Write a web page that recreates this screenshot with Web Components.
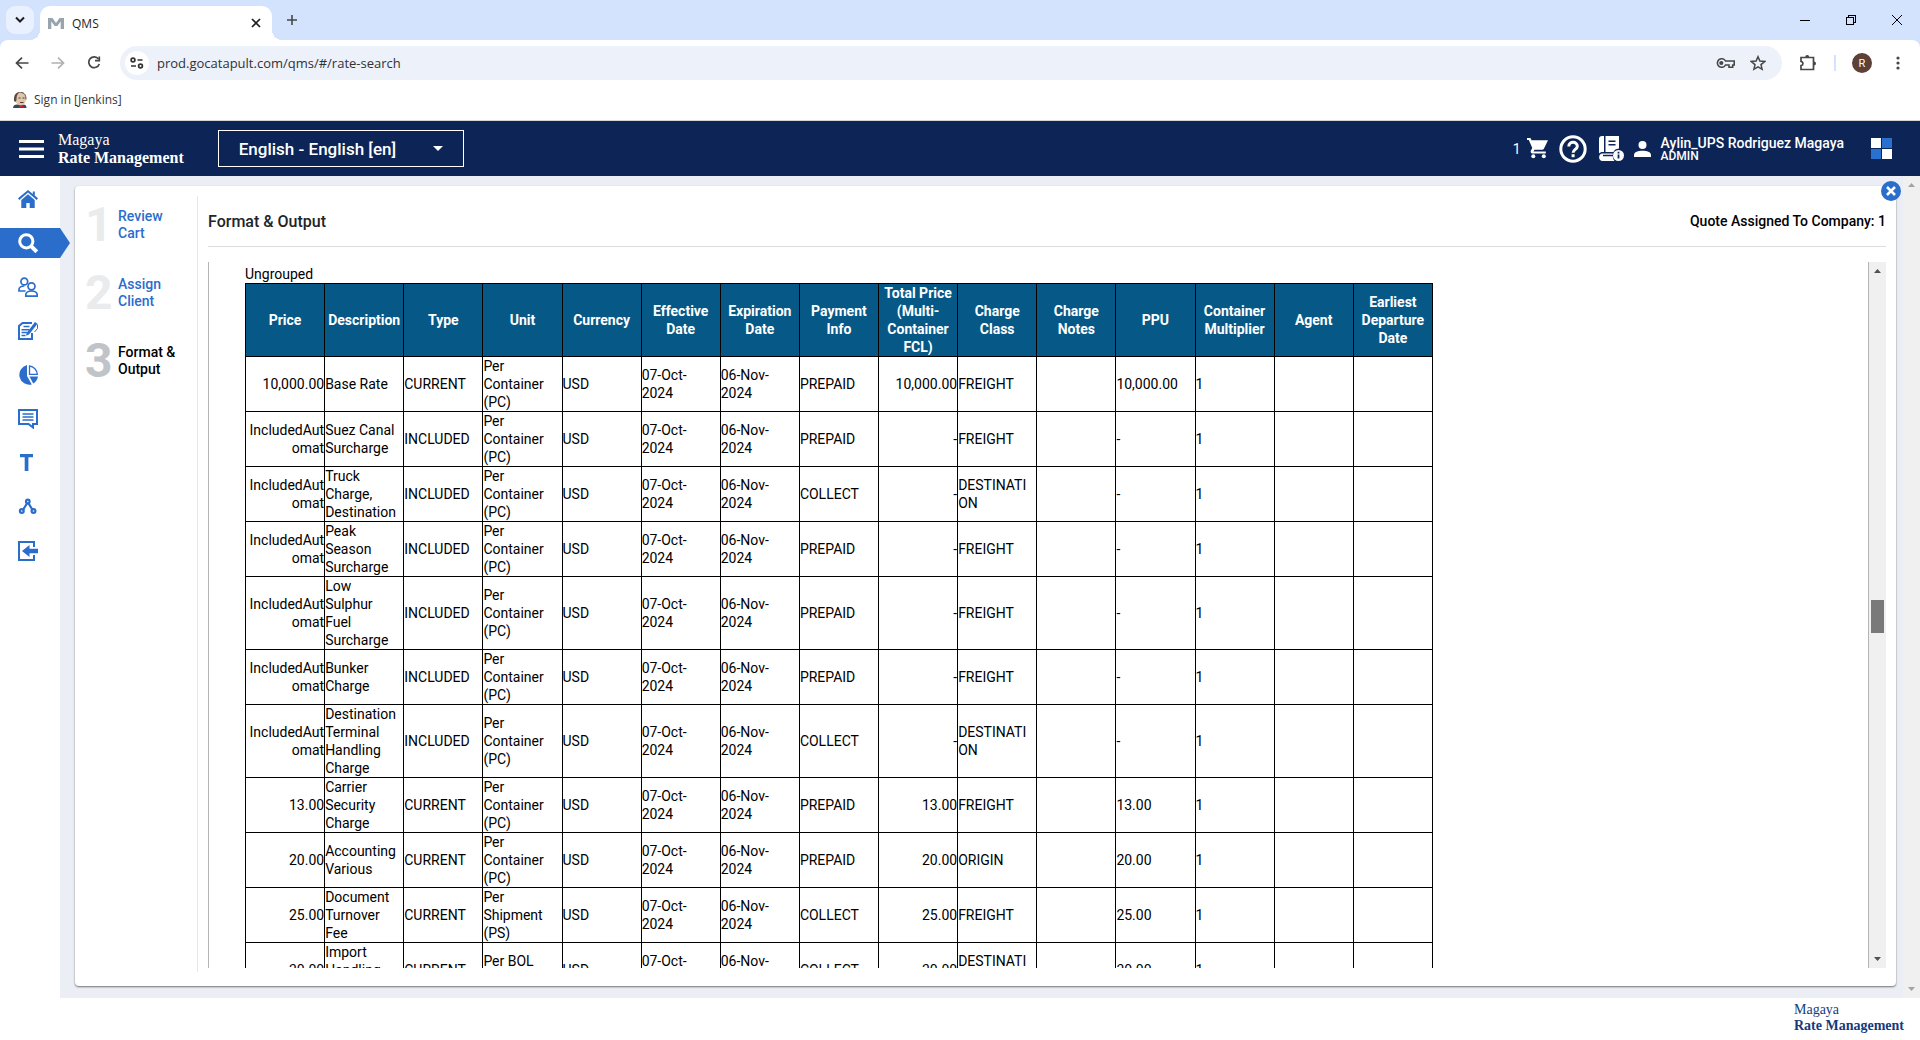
<!DOCTYPE html>
<html lang="en">
<head>
<meta charset="utf-8">
<title>QMS</title>
<style>
html,body{margin:0;height:100%}
body{font-family:Roboto,"Liberation Sans",sans-serif;font-size:14px;color:#000;background:#fff;overflow:hidden}
</style>
</head>
<body>
<qms-window></qms-window>
<script>
const base = `<style>
*{box-sizing:border-box}
button{border:0;background:none;padding:0;margin:0;font:inherit;color:inherit;display:flex;align-items:center;justify-content:center;flex:none}
a{color:inherit;text-decoration:none}
svg{display:block;flex:none}
</style>`;
function define(name, html, setup) {
  customElements.define(name, class extends HTMLElement {
    connectedCallback() {
      if (this.shadowRoot) return;
      const root = this.attachShadow({mode: 'open'});
      const t = document.createElement('template');
      t.innerHTML = base + html;
      root.append(t.content.cloneNode(true));
      if (setup) setup(root, this);
    }
  });
}

define('tab-strip', `<style>
:host{display:flex;align-items:stretch;height:40px;background:#d3e3fd;padding-left:6px;font-family:"Open Sans",sans-serif;font-size:12px;color:#1f1f1f}
.list{width:28px;height:28px;margin-top:6px;border-radius:9px;background:#e9f1fe}
.tab{display:flex;align-items:center;gap:8px;width:232px;margin:6px 0 0 6px;padding:0 8px;border-radius:10px 10px 0 0;background:#fff;position:relative}
.tab::before,.tab::after{content:"";position:absolute;bottom:0;width:10px;height:10px}
.tab::before{left:-10px;background:radial-gradient(circle at 0 0,#0000 10px,#fff 10px)}
.tab::after{right:-10px;background:radial-gradient(circle at 100% 0,#0000 10px,#fff 10px)}
.tab span{flex:1}
.tab button{width:16px;height:16px}
.new{width:28px;margin-left:6px}
.win{display:flex;margin-left:auto}
.win button{width:46px}
</style>
<button class="list" aria-label="Search tabs"><svg width="10" height="8" fill="none" stroke="#1f1f1f" stroke-width="2"><path d="M1 1.5l4 4 4-4"/></svg></button>
<div class="tab"><svg width="16" height="11" viewBox="0 0 16 11" fill="#9aa4ad"><path d="M0 11V0h4.500L8 5 11.500 0H16v11h-3.300V3.500L9.300 8H6.700L3.300 3.500V11z"/></svg><span>QMS</span>
<button aria-label="Close tab"><svg width="10" height="10" stroke="#1f1f1f" stroke-width="1.700"><path d="M1 1l8 8M9 1l-8 8"/></svg></button></div>
<button class="new" aria-label="New tab"><svg width="12" height="12" stroke="#474747" stroke-width="1.600"><path d="M6 1v10M1 6h10"/></svg></button>
<div class="win">
<button aria-label="Minimize"><svg width="10" height="10" stroke="#000" shape-rendering="crispEdges"><path d="M0 5.500h10"/></svg></button>
<button aria-label="Restore"><svg width="10" height="10" fill="none" stroke="#000" shape-rendering="crispEdges"><path d="M.5 2.500h7v7h-7zM2.500 2.500v-2h7v7h-2"/></svg></button>
<button aria-label="Close"><svg width="10" height="10" stroke="#000"><path d="M0 0l10 10M10 0L0 10"/></svg></button>
</div>`);

define('browser-toolbar', `<style>
:host{display:block;background:#d3e3fd;font-family:"Open Sans",sans-serif;color:#1f1f1f}
.wrap{background:#fff;border-radius:8px 8px 0 0;border-bottom:1px solid #d5d5d5;height:81px}
.bar{display:flex;align-items:center;height:46px;padding:0 12px 0 8px}
.nav{width:28px;height:28px;margin-right:8px}
.omni{flex:1;display:flex;align-items:center;height:34px;margin:0 12px 0 4px;border-radius:17px;background:#edf1fa;padding:0 16px 0 5px}
.site{width:24px;height:24px;border-radius:12px;background:#fff}
input{flex:1;min-width:0;border:0;outline:0;background:none;padding:0 0 0 8px;font:13px/20px "Open Sans",sans-serif;color:#303236}
.k{margin-right:15px}
.ext{width:28px}
.sep{width:2px;height:16px;background:#d3e3fd;margin:0 16px 0 12px}
.av{width:20px;height:20px;border-radius:10px;background:#5d4037;color:#fff;font:11px Roboto,sans-serif}
.more{width:20px;margin-left:16px}
.marks{display:flex;padding:6px 0 0 12px}
.marks a{display:flex;align-items:center;gap:6px;height:16px;font-size:12px;line-height:16px;color:#33363a}
</style>
<div class="wrap"><div class="bar">
<button class="nav" aria-label="Back"><svg width="14" height="12" fill="none" stroke="#474747" stroke-width="1.700"><path d="M13.500 6H1.500M7 .6L1.500 6 7 11.400"/></svg></button>
<button class="nav" aria-label="Forward"><svg width="14" height="12" fill="none" stroke="#b0b1b3" stroke-width="1.700"><path d="M.5 6h12M7 .6L12.500 6 7 11.400"/></svg></button>
<button class="nav" aria-label="Reload"><svg width="14" height="14" fill="none" stroke="#474747" stroke-width="1.700"><path d="M11.500 3A5.400 5.400 0 1 0 12.300 8"/><path d="M12.300 .5v4.200H8"/></svg></button>
<div class="omni"><button class="site" aria-label="Site information"><svg width="14" height="12" fill="none" stroke="#333" stroke-width="1.700"><circle cx="3" cy="3" r="1.900"/><path d="M7.500 3h5M1 9h5"/><circle cx="10.500" cy="9" r="1.900"/></svg></button>
<input aria-label="Address" value="prod.gocatapult.com/qms/#/rate-search">
<button class="k" aria-label="Passwords"><svg width="19" height="12" fill="none" stroke="#474747" stroke-width="1.600"><path d="M9.500 4A4.300 4.300 0 1 0 9.500 8H13v2.200h3.700V8h1.500V4z"/><circle cx="5.300" cy="6" r="1.300" fill="#474747"/></svg></button>
<button aria-label="Bookmark"><svg width="16" height="16" viewBox="0 0 16 16" fill="none" stroke="#474747" stroke-width="1.500"><path d="M8 1.700l1.900 4.400 4.800.4-3.700 3.100 1.100 4.700L8 11.800l-4.100 2.500L5 9.600 1.300 6.500l4.800-.4z"/></svg></button></div>
<button class="ext" aria-label="Extensions"><svg width="18" height="18" viewBox="0 0 18 18"><path fill="none" stroke="#474747" stroke-width="1.700" d="M2 3.500h12.500v12H2v-3.800c2.600-.6 2.600-3.800 0-4.400z"/><path fill="#474747" d="M6.200 3a2 2 0 0 1 4 0zM15 7.500a2 2 0 0 1 0 4z"/></svg></button>
<div class="sep"></div><button class="av">R</button>
<button class="more" aria-label="Menu"><svg width="4" height="14" fill="#474747"><circle cx="2" cy="2" r="1.600"/><circle cx="2" cy="7" r="1.600"/><circle cx="2" cy="12" r="1.600"/></svg></button>
</div>
<div class="marks"><a href="#"><svg width="16" height="16" viewBox="0 0 16 16"><path d="M1 16c0-2.500 2-3.500 4-3.500h6c2.500 0 3.500 1 3.500 3.500z" fill="#36495c"/><path d="M3 6c0-8 11-8 11 0 0 4-2 7.500-5.500 7.500S3 9 3 6z" fill="#e0c6ab"/><path d="M2 9C1.500 2 4.500 0 8.500 0 6 1 4.500 3 4.500 8L3.500 10z" fill="#5b4a42"/><path d="M8.500 .5c4 0 5.500 2.500 5.500 7" fill="none" stroke="#4a4a4a"/><path d="M6.500 6h2M10.500 6h2M8 10.500h3.500" stroke="#4b3f3a"/><path d="M7 13l2 1 2.500-1v3L9 15l-2 1z" fill="#c8202f"/></svg>Sign in [Jenkins]</a></div></div>`);

define('brand-name', `<style>
:host{display:block;font:16px/18px "Liberation Serif",serif}
:host([small]){font-size:14px;line-height:16px}
b{display:block}
</style>Magaya<b>Rate Management</b>`);

define('app-header', `<style>
:host{display:flex;align-items:center;height:55px;background:#0d2456;color:#fff;padding:0 28px 0 19px}
.menu{width:25px}
brand-name{margin-left:14px}
.lang{display:grid;align-items:center;width:246px;height:37px;margin-left:34px;border:1px solid #fff}
.lang>*{grid-area:1/1}
select{appearance:none;width:100%;height:100%;border:0;background:none;color:#fff;font:500 17px Roboto,sans-serif;padding:0 20px}
.lang svg{justify-self:end;margin-right:20px;pointer-events:none}
.right{display:flex;align-items:center;margin-left:auto}
.cart{gap:6px;font-weight:400}
.help{margin-left:10px}.book{margin-left:12px}.user{margin-left:10px}
.who{margin-left:10px;font-weight:500;font-size:14px;line-height:14px}
.who small{display:block;font-size:12px;line-height:12px}
.apps{margin-left:27px}
</style>
<button class="menu" aria-label="Menu"><svg width="25" height="18" fill="#fff"><path d="M0 0h25v3H0zM0 7.500h25v3H0zM0 15h25v3H0z"/></svg></button>
<brand-name></brand-name>
<div class="lang"><select aria-label="Language"><option>English - English [en]</option></select><svg width="10" height="5" fill="#fff"><path d="M0 0h10L5 5z"/></svg></div>
<div class="right">
<button class="cart" aria-label="Cart">1<svg width="22" height="21" viewBox="0 0 22 21" fill="#fff"><path d="M0 0h3.500l1 2.200H21L17 10.500c-.4.800-1 1.200-1.800 1.200H7.500L6.500 13.500h12.300v2H5.500c-1.600 0-2.300-1.600-1.600-2.900L5.300 10 1.800 2H0z"/><circle cx="6.300" cy="18.300" r="2"/><circle cx="16.800" cy="18.300" r="2"/></svg></button>
<button class="help" aria-label="Help"><svg width="28" height="28" viewBox="0 0 28 28" fill="none" stroke="#fff" stroke-width="3"><circle cx="14" cy="14" r="12.200"/><path d="M9.800 11.500c0-5.600 8.500-5.400 8.500-.3 0 3.200-4.200 3.300-4.200 6.600"/><path d="M12.600 20.700h3"/></svg></button>
<button class="book" aria-label="Documentation"><svg width="25" height="25" viewBox="0 0 25 25"><path fill="#fff" d="M3 0h2v16H3.500c-1.400 0-2.500.5-3.500 1.500V3c0-1.800 1.200-3 3-3zM6.500 0H20v12.500c-3 .3-4.700 1.500-5.600 3.500H6.500zM3.500 17.500h10.300v1.300H4v1.400h9.800c0 1.800.7 3.300 1.700 4.800H3.500C-1 25-1 17.500 3.500 17.500z"/><path stroke="#0d2456" stroke-width="1.500" d="M9.500 5.200h7M9.500 8.700h7"/><circle cx="19.500" cy="19.500" r="5.500" fill="#fff"/><path stroke="#0d2456" stroke-width="1.800" d="M19.500 18.500v4M19.500 15.800v1.600"/></svg></button>
<button class="user" aria-label="Account"><svg width="17" height="16" viewBox="0 0 17 16" fill="#fff"><circle cx="8.500" cy="4" r="4"/><path d="M0 16v-2.200c0-5.500 17-5.500 17 0V16z"/></svg></button>
<div class="who">Aylin_UPS Rodriguez Magaya<small>ADMIN</small></div>
<button class="apps" aria-label="Apps"><svg width="21" height="21"><path fill="#fff" d="M0 0h10v10H0zM11 11h10v10H11z"/><path fill="#2a70cf" d="M11 0h10v10H11zM0 11h10v10H0z"/></svg></button>
</div>`);

const navIcons = {
Home:'<path fill="currentColor" d="M10 1L0 9.300l1.300 1.600L10 3.600l8.700 7.300L20 9.300 16.800 6.600V2.500h-2v2.400z"/><path fill="currentColor" d="M10 5.300L3.300 11v8h5v-5h3.400v5h5v-8z"/>',
Search:'<circle cx="8.300" cy="8.300" r="6.600" fill="none" stroke="currentColor" stroke-width="3"/><path stroke="currentColor" stroke-width="4" d="M12.800 12.800l6 6"/>',
Clients:'<g fill="none" stroke="currentColor" stroke-width="1.700"><circle cx="6.300" cy="4.500" r="3.400"/><path d="M7.500 14H1v-1.500C1 10.500 3.500 9 6.300 9"/><circle cx="13.500" cy="9.300" r="3.500"/><path d="M7.800 19.200v-1.400c0-5.100 11.400-5.100 11.400 0v1.400z"/></g>',
Quotes:'<path fill="none" stroke="currentColor" stroke-width="2" d="M14 2H4.500L1 5v13h13v-6"/><path stroke="currentColor" stroke-width="1.500" d="M5.500 5.500h6M3.500 8.700h8M3.500 11.600h6M3.500 14.500h4"/><path fill="currentColor" d="M17 1l2.500 1.800L11 13.500l-3 1.300.8-3z"/><path fill="none" stroke="currentColor" d="M19.500 3.500v4l-3 3.500"/>',
Reports:'<path fill="currentColor" d="M9 0v11l4.800 8.500A10 10 0 1 1 9 0zM11.500 11.500H20a10 10 0 0 1-4.800 7z"/><path fill="none" stroke="currentColor" stroke-width="1.300" d="M11.500 1v8.300h7.800A8.800 8.800 0 0 0 11.500 1z"/>',
Messages:'<path fill="none" stroke="currentColor" stroke-width="2" d="M1 1h18v14h-4v3.500L10.500 15H1z"/><path stroke="currentColor" stroke-width="1.600" d="M4.500 5h11M4.500 8h11M4.500 11h11"/>',
Tariffs:'<path fill="currentColor" d="M2 1h13v3.300h-4.600V18H6.700V4.300H2z"/>',
Routes:'<g fill="none" stroke="currentColor" stroke-width="2.200"><circle cx="9.800" cy="4.500" r="1.800"/><circle cx="3.800" cy="14" r="1.900"/><circle cx="15.500" cy="14" r="1.900"/><path d="M9.300 6L5 12.800M10.300 6l4.200 6.800"/></g>',
Exit:'<path fill="none" stroke="currentColor" stroke-width="2" d="M16 6V1H1v18h15v-5"/><path fill="currentColor" d="M4 10l7.500-6v3.800H20v4.400h-8.500V16z"/>'
};
define('side-nav', `<style>
:host{display:flex;flex-direction:column;gap:14px;width:60px;padding-top:8px;background:#fff;flex:none;position:relative;z-index:1}
a{display:flex;align-items:center;height:30px;padding-left:18px;color:#2a6dcb}
a.on{background:#2a6dcb;color:#fff;width:70px;clip-path:polygon(0 0,60px 0,100% 50%,60px 100%,0 100%)}
</style>` + Object.entries(navIcons).map(([n,p]) => `<a href="#" aria-label="${n}"${n==='Search'?' class="on"':''}><svg width="20" height="20" viewBox="0 0 20 20">${p}</svg></a>`).join(''));

define('step-item', `<style>
:host{display:flex;align-items:center;box-sizing:border-box;height:68px;color:#2a6dcb;--num:#e9ebec;padding:0 0 10px 10px}
:host([current]){color:#000;--num:#c0c4c8}
b{width:33px;font-size:48px;line-height:48px;color:var(--num)}
a{font-weight:500;line-height:17px;width:70px}
</style><b></b><a href="#"><slot></slot></a>`, (r, el) => r.querySelector('b').textContent = el.getAttribute('number'));

define('scroll-track', `<style>
:host{display:flex;flex-direction:column;align-items:center;justify-content:space-between;width:17px;background:#f0f0f0;padding:7px 0;flex:none;box-sizing:border-box}
i{display:none;width:13px;height:33px;background:#797979;margin-top:327px;margin-bottom:auto}
:host([thumb]) i{display:block}
svg{fill:#a3a3a3}
:host([thumb]) svg{fill:#505050}
</style><svg width="7" height="4"><path d="M0 4L3.500 0 7 4z"/></svg><i></i><svg width="7" height="4"><path d="M0 0h7L3.500 4z"/></svg>`);

const heads = ['Price','Description','Type','Unit','Currency','Effective Date','Expiration Date','Payment Info','Total Price (Multi-Container FCL)','Charge Class','Charge Notes','PPU','Container Multiplier','Agent','Earliest Departure Date'];
const destination = 'DESTINATI<wbr>ON';
const charges = [
['10,000.00','Base Rate','Per Container (PC)','PREPAID','FREIGHT'],
[null,'Suez Canal Surcharge','Per Container (PC)','PREPAID','FREIGHT'],
[null,'Truck Charge, Destination','Per Container (PC)','COLLECT',destination],
[null,'Peak Season Surcharge','Per Container (PC)','PREPAID','FREIGHT'],
[null,'Low<br>Sulphur<br>Fuel Surcharge','Per Container (PC)','PREPAID','FREIGHT'],
[null,'Bunker Charge','Per Container (PC)','PREPAID','FREIGHT'],
[null,'Destination Terminal Handling Charge','Per Container (PC)','COLLECT',destination],
['13.00','Carrier Security Charge','Per Container (PC)','PREPAID','FREIGHT'],
['20.00','Accounting Various','Per Container (PC)','PREPAID','ORIGIN'],
['25.00','Document Turnover Fee','Per Shipment (PS)','COLLECT','FREIGHT'],
['30.00','Import Handling Fee','Per BOL (PB)','COLLECT',destination]
];
define('charge-table', `<style>
:host{display:block;line-height:18px}
table{border-collapse:collapse;table-layout:fixed;width:1188px}
th,td{border:1px solid #000;padding:0;overflow-wrap:anywhere;text-align:left}
th{background:#065886;color:#fff;font-weight:700;text-align:center}
td:nth-child(1),td:nth-child(9){text-align:right}
</style><table><thead><tr>${heads.map(h => `<th>${h}</th>`).join('')}</tr></thead><tbody>${charges.map(([p,d,u,pay,c]) =>
`<tr>${[p||'IncludedAutomat',d,p?'CURRENT':'INCLUDED',u,'USD','07-Oct-<br>2024','06-Nov-<br>2024',pay,p||'-',c,'',p||'-','1','',''].map(v => `<td>${v}</td>`).join('')}</tr>`).join('')}</tbody></table>`);

define('quote-card', `<style>
:host{display:flex;flex:1;min-width:0;background:#fff;border-radius:4px;box-shadow:0 1px 2px #0008;padding:10px;position:relative}
.close{position:absolute;right:-5px;top:-5px;width:20px;height:20px;border-radius:10px;background:#2a6dcb}
nav{width:123px;border-right:1px solid #e6e7e9;margin:0 10px 4px -10px;flex:none}
main{flex:1;min-width:0;display:flex;flex-direction:column;padding-bottom:8px}
header{display:flex;align-items:center;justify-content:space-between;height:51px;border-bottom:1px solid #dcdddf;font-weight:500}
h1{margin:0;font-size:16px;font-weight:500;color:#212529}
.view{flex:1;min-height:0;display:flex;margin-top:15px;border-left:1px solid #b5b5b5}
.doc{flex:1;min-width:0;overflow:hidden;padding:3px 0 0 36px;border-right:1px solid #b5b5b5;line-height:18px}
.doc p{margin:0}
</style>
<nav aria-label="Steps"><step-item number="1">Review Cart</step-item><step-item number="2">Assign Client</step-item><step-item number="3" current>Format &amp; Output</step-item></nav>
<main><header><h1>Format &amp; Output</h1><span>Quote Assigned To Company: 1</span></header>
<div class="view"><div class="doc"><p>Ungrouped</p><charge-table></charge-table></div><scroll-track thumb></scroll-track></div></main>
<button class="close" aria-label="Close"><svg width="10" height="10" stroke="#fff" stroke-width="2.500"><path d="M1 1l8 8M9 1L1 9"/></svg></button>`);

define('qms-window', `<style>
:host{display:flex;flex-direction:column;height:100vh}
.body{flex:1;min-height:0;display:flex;background:#ebeff5}
.stage{flex:1;min-width:0;min-height:0;display:flex;padding:10px 7px 12px 15px}
footer{display:flex;justify-content:flex-end;height:42px;padding:4px 16px 0 0;color:#153a7d}
</style>
<tab-strip></tab-strip><browser-toolbar></browser-toolbar><app-header></app-header>
<div class="body"><side-nav></side-nav><div class="stage"><quote-card></quote-card></div><scroll-track></scroll-track></div>
<footer><brand-name small></brand-name></footer>`);
</script>
</body>
</html>
